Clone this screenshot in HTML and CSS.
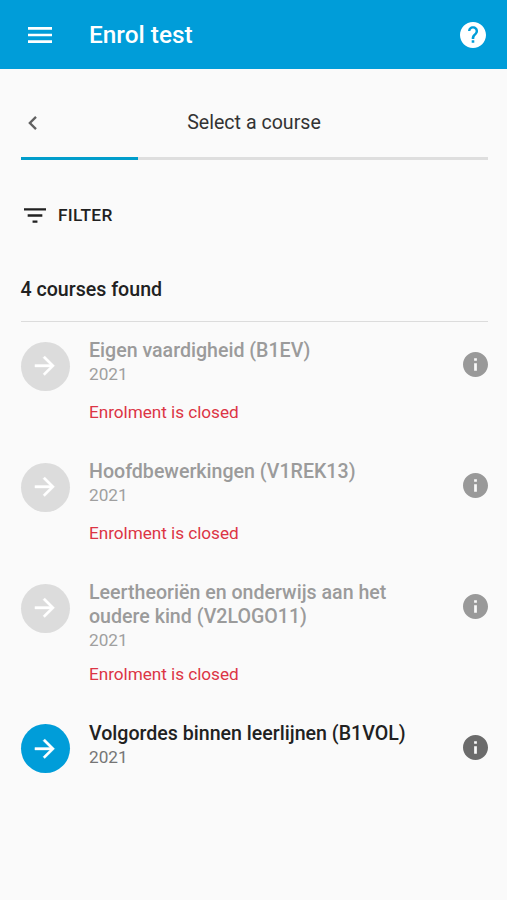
FILE: index.html
```html
<!DOCTYPE html>
<html lang="en">
<head>
<meta charset="utf-8">
<title>Enrol test</title>
<link rel="stylesheet" href="styles.css">
</head>
<body>
<svg class="defs" width="0" height="0">
  <symbol id="arrow" viewBox="0 0 24 24"><path stroke="currentColor" stroke-width=".3" d="M12 4l-1.410 1.410L16.170 11H4v2h12.170l-5.580 5.590L12 20l8-8z"/></symbol>
  <symbol id="info" viewBox="2 2 20 20"><path d="M12 2C6.480 2 2 6.480 2 12s4.480 10 10 10 10-4.480 10-10S17.520 2 12 2zm1.100 15h-2.200v-6h2.200v6zm0-8h-2.200V7h2.200v2z"/></symbol>
</svg>
<header class="bar">
  <svg class="menu" viewBox="3 6 18 12"><path d="M3 18h18v-2H3v2zm0-5h18v-2H3v2zm0-7v2h18V6H3z"/></svg>
  <h1 class="bar-title">Enrol test</h1>
  <svg class="help" viewBox="2 2 20 20"><path d="M12 2C6.480 2 2 6.480 2 12s4.480 10 10 10 10-4.480 10-10S17.520 2 12 2zm1 16h-2v-2h2v2zm2.070-6.750l-.9.920C13.450 12.900 13 13.500 13 15h-2v-.5c0-1.100.45-2.100 1.170-2.830l1.240-1.260c.37-.36.59-.86.59-1.410 0-1.100-.9-2-2-2s-2 .9-2 2H8.200c0-2.210 1.590-3.800 3.800-3.800s3.900 1.590 3.900 3.800c0 .88-.26 1.680-.83 2.250z"/></svg>
</header>
<main class="content">
  <div class="step">
    <svg class="back" viewBox="8 6 7.410 12"><path d="M15.410 7.410L14 6l-6 6 6 6 1.410-1.410L10.830 12z"/></svg>
    <h2 class="step-title">Select a course</h2>
  </div>
  <div class="progress"><div class="progress-value"></div></div>
  <div class="filter">
    <svg class="filter-icon" viewBox="3 6 18 12"><path d="M10 18h4v-2h-4v2zM3 6v2h18V6H3zm3 7h12v-2H6v2z"/></svg>
    <span>FILTER</span>
  </div>
  <h3 class="count">4 courses found</h3>
  <ul class="courses">
    <li class="course closed">
      <span class="go"><svg class="arrow"><use href="#arrow"/></svg></span>
      <div class="details"><div class="name">Eigen vaardigheid (B1EV)</div><div class="year">2021</div><div class="status">Enrolment is closed</div></div>
      <svg class="info"><use href="#info"/></svg>
    </li>
    <li class="course closed">
      <span class="go"><svg class="arrow"><use href="#arrow"/></svg></span>
      <div class="details"><div class="name">Hoofdbewerkingen (V1REK13)</div><div class="year">2021</div><div class="status">Enrolment is closed</div></div>
      <svg class="info"><use href="#info"/></svg>
    </li>
    <li class="course closed long">
      <span class="go"><svg class="arrow"><use href="#arrow"/></svg></span>
      <div class="details"><div class="name">Leertheoriën en onderwijs aan het<br>oudere kind (V2LOGO11)</div><div class="year">2021</div><div class="status">Enrolment is closed</div></div>
      <svg class="info"><use href="#info"/></svg>
    </li>
    <li class="course open">
      <span class="go"><svg class="arrow"><use href="#arrow"/></svg></span>
      <div class="details"><div class="name">Volgordes binnen leerlijnen (B1VOL)</div><div class="year">2021</div></div>
      <svg class="info"><use href="#info"/></svg>
    </li>
  </ul>
</main>
</body>
</html>
```
FILE: styles.css
```css
* { box-sizing: border-box; }
body { margin: 0; min-height: 900px; background: #fafafa; color: #212121; font-family: Roboto, "Liberation Sans", sans-serif; }
h1, h2, h3, ul { margin: 0; padding: 0; }
svg { display: block; flex: none; fill: currentColor; }
.defs { position: absolute; }
.bar { display: flex; align-items: center; height: 69px; padding: 0 21px 0 28px; background: #009dd9; color: #fff; }
.menu { width: 24px; height: 16px; }
.bar-title { flex: 1; margin-left: 37px; padding-top: 1px; font-size: 24.400px; line-height: 30px; font-weight: 500; }
.help { width: 26px; height: 26px; }
.content { padding: 0 19.500px 0 20.500px; }
.step { display: grid; grid-template-columns: 1fr auto 1fr; align-items: center; height: 88px; padding-top: 19px; }
.back { width: 9px; height: 14px; margin-left: 7.500px; color: #616161; }
.step-title { font-size: 19.600px; line-height: 25px; font-weight: 400; color: #333; }
.progress { height: 2.500px; background: #dedede; }
.progress-value { width: 25.200%; height: 100%; background: #009dcb; }
.filter { display: flex; align-items: center; height: 30px; margin-top: 40px; padding-left: 3.500px; font-size: 17.300px; font-weight: 500; letter-spacing: .3px; }
.filter-icon { width: 22px; height: 15px; margin: 1px 12px 0 0; }
.count { height: 92px; padding-top: 47px; font-size: 19.600px; line-height: 26px; font-weight: 500; border-bottom: 1px solid #dcdcdc; }
.courses { list-style: none; }
.course { display: flex; align-items: flex-start; height: 121px; padding-top: 16.500px; }
.long { height: 140.500px; }
.go { display: flex; align-items: center; justify-content: center; width: 49px; height: 49px; margin-top: 3.500px; border-radius: 50%; background: #009dd9; color: #fff; }
.arrow { width: 29.500px; height: 29.500px; }
.details { flex: 1; margin-left: 19.500px; padding-top: 1px; }
.name { font-size: 19.600px; line-height: 24px; font-weight: 500; }
.year { font-size: 17.200px; line-height: 22px; color: #757575; }
.open .year { margin-top: .5px; }
.status { margin-top: 15px; font-size: 17.200px; line-height: 24px; letter-spacing: -.04px; color: #dc3545; }
.long .status { margin-top: 11px; }
.info { width: 25px; height: 25px; margin-top: 14px; color: #6b6b6b; }
.closed .go { background: #dcdcdc; }
.closed .name { color: #9b9b9b; }
.closed .year { color: #9f9f9f; }
.closed .info { color: #999; }
```
